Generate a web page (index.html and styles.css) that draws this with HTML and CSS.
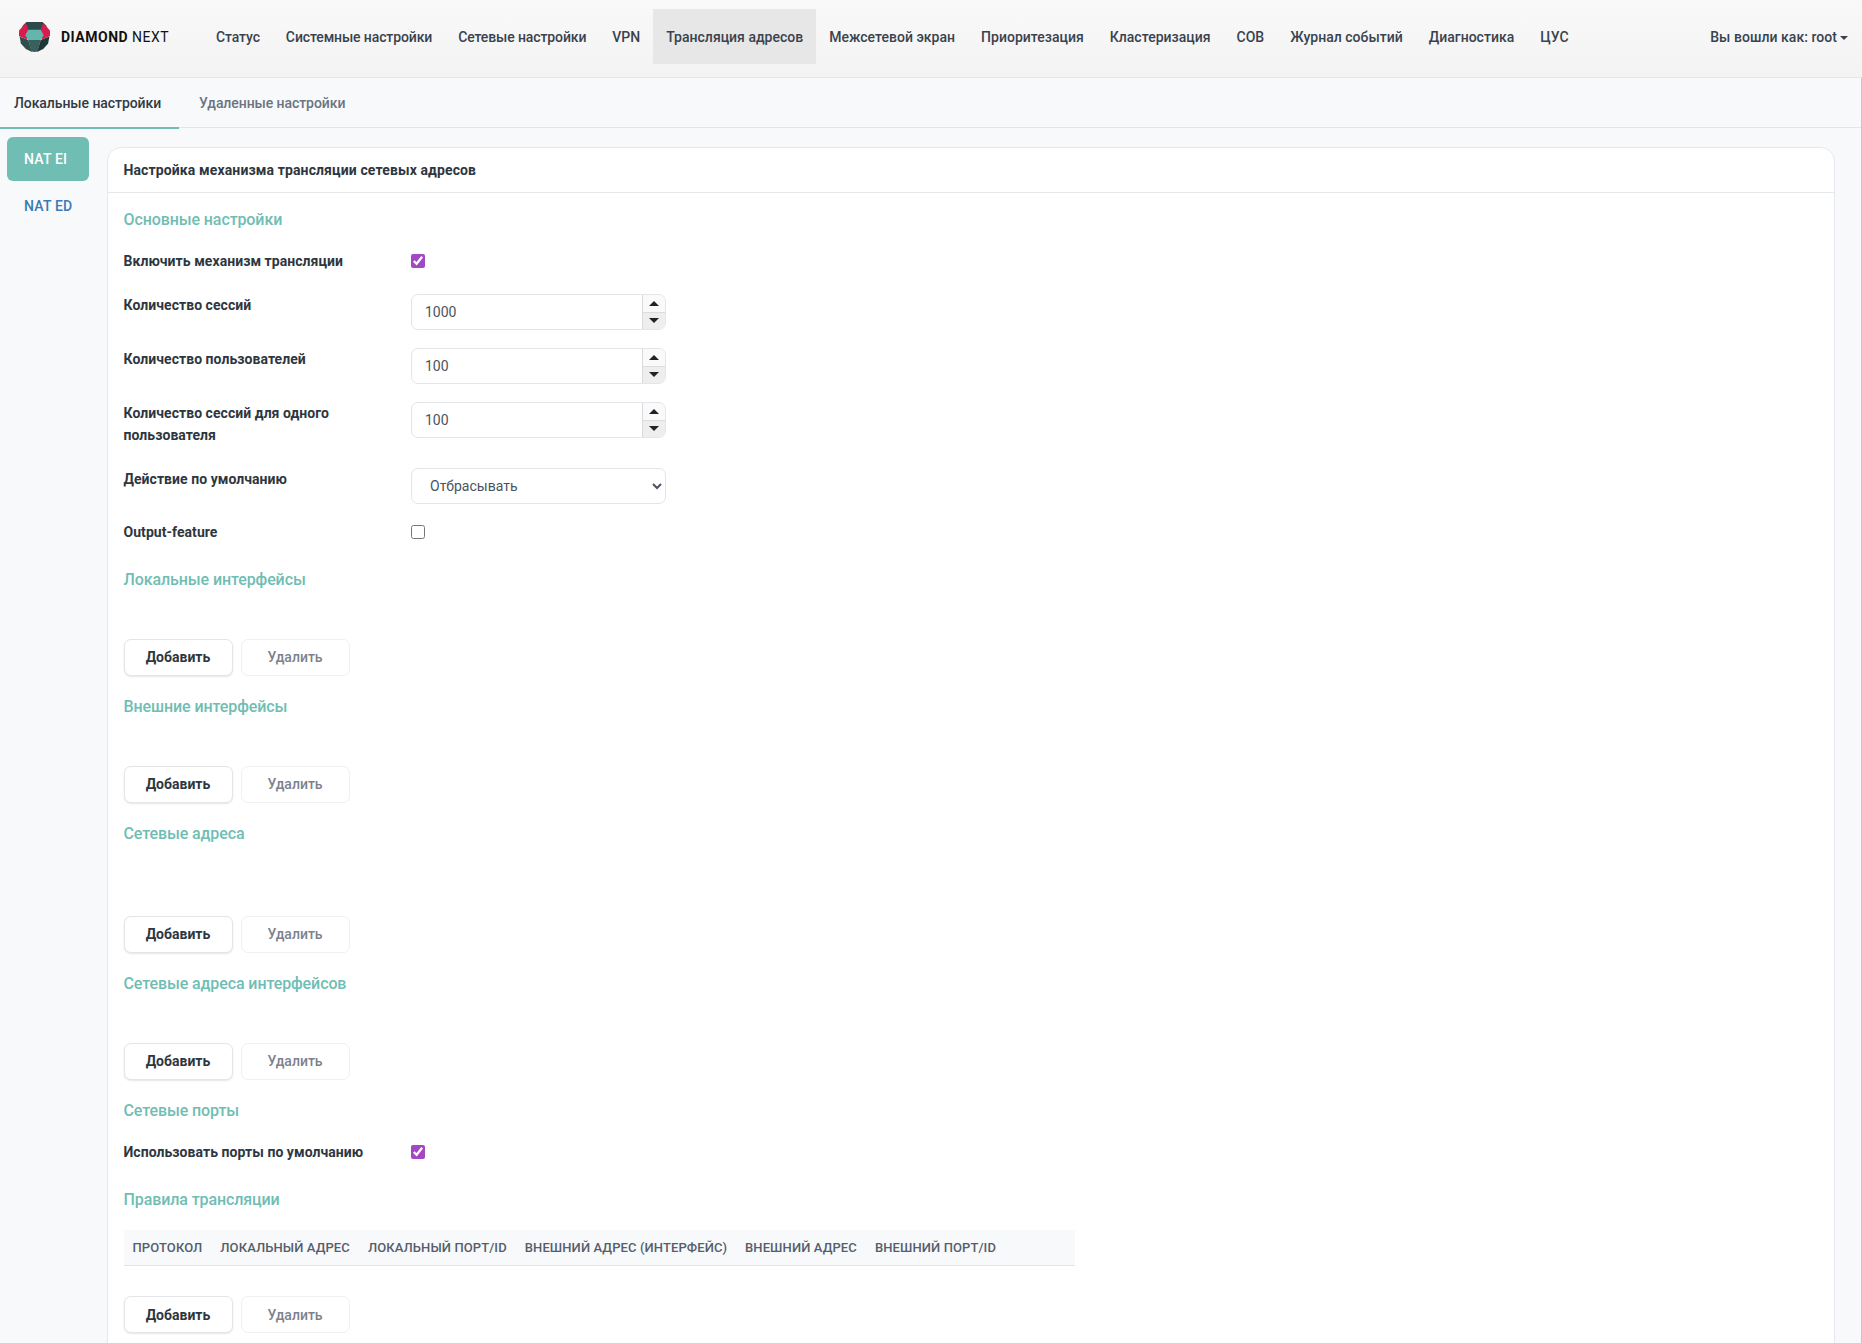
FILE: index.html
```html
<!DOCTYPE html>
<html lang="ru">
<head>
    <meta charset="UTF-8">
    <title>Diamond Next</title>
    <link rel="stylesheet" href="styles.css">
</head>
<body>
    <header class="topbar">
        <a class="brand" href="#">
            <svg class="brand-logo" viewBox="0 0 100 100" width="31" height="30" preserveAspectRatio="none">
                <polygon points="24,0 76,0 90,14 70,30 30,30 10,14" fill="#2b4a49"/>
                <polygon points="22,3 32,30 26,58 0,47 0,28" fill="#d91c4b"/>
                <polygon points="78,3 68,30 74,58 100,47 100,28" fill="#d91c4b"/>
                <polygon points="30,26 70,26 80,44 70,60 30,60 20,44" fill="#63b6ae"/>
                <polygon points="2,48 30,60 42,100 22,90 6,72" fill="#2f4f4e"/>
                <polygon points="98,48 70,60 58,100 78,90 94,72" fill="#1e3838"/>
                <polygon points="30,60 70,60 60,98 50,100 40,98" fill="#3a605e"/>
            </svg>
            <span class="brand-name"><b>DIAMOND</b> NEXT</span>
        </a>
        <nav class="main-nav">
            <a href="#">Статус</a>
            <a href="#">Системные настройки</a>
            <a href="#">Сетевые настройки</a>
            <a href="#">VPN</a>
            <a href="#" class="active">Трансляция адресов</a>
            <a href="#">Межсетевой экран</a>
            <a href="#">Приоритезация</a>
            <a href="#">Кластеризация</a>
            <a href="#">СОВ</a>
            <a href="#">Журнал событий</a>
            <a href="#">Диагностика</a>
            <a href="#">ЦУС</a>
        </nav>
        <a class="user-menu" href="#">Вы вошли как: root<span class="caret"></span></a>
    </header>

    <div class="content">
        <div class="tabs">
            <a href="#" class="tab active">Локальные настройки</a>
            <a href="#" class="tab">Удаленные настройки</a>
        </div>

        <div class="layout">
            <aside class="side-nav">
                <a href="#" class="pill active">NAT EI</a>
                <a href="#" class="pill">NAT ED</a>
            </aside>

            <main class="card">
                <div class="card-header">Настройка механизма трансляции сетевых адресов</div>
                <div class="card-body">
                    <h5 class="section-title">Основные настройки</h5>

                    <div class="form-row row-check">
                        <label>Включить механизм трансляции</label>
                        <input type="checkbox" checked>
                    </div>
                    <div class="form-row">
                        <label>Количество сессий</label>
                        <div class="number-input">
                            <span class="value">1000</span>
                            <span class="spin"><i class="up"></i><i class="down"></i></span>
                        </div>
                    </div>
                    <div class="form-row">
                        <label>Количество пользователей</label>
                        <div class="number-input">
                            <span class="value">100</span>
                            <span class="spin"><i class="up"></i><i class="down"></i></span>
                        </div>
                    </div>
                    <div class="form-row row-wrapped">
                        <label>Количество сессий для одного пользователя</label>
                        <div class="number-input">
                            <span class="value">100</span>
                            <span class="spin"><i class="up"></i><i class="down"></i></span>
                        </div>
                    </div>
                    <div class="form-row row-select">
                        <label>Действие по умолчанию</label>
                        <select class="select">
                            <option>Отбрасывать</option>
                        </select>
                    </div>
                    <div class="form-row row-check">
                        <label>Output-feature</label>
                        <input type="checkbox">
                    </div>

                    <h5 class="section-title">Локальные интерфейсы</h5>
                    <div class="actions">
                        <button class="btn">Добавить</button>
                        <button class="btn disabled">Удалить</button>
                    </div>

                    <h5 class="section-title">Внешние интерфейсы</h5>
                    <div class="actions">
                        <button class="btn">Добавить</button>
                        <button class="btn disabled">Удалить</button>
                    </div>

                    <h5 class="section-title">Сетевые адреса</h5>
                    <div class="actions tall">
                        <button class="btn">Добавить</button>
                        <button class="btn disabled">Удалить</button>
                    </div>

                    <h5 class="section-title">Сетевые адреса интерфейсов</h5>
                    <div class="actions">
                        <button class="btn">Добавить</button>
                        <button class="btn disabled">Удалить</button>
                    </div>

                    <h5 class="section-title">Сетевые порты</h5>
                    <div class="form-row row-check">
                        <label>Использовать порты по умолчанию</label>
                        <input type="checkbox" checked>
                    </div>

                    <h5 class="section-title">Правила трансляции</h5>
                    <table class="rules">
                        <thead>
                            <tr>
                                <th>Протокол</th>
                                <th>Локальный адрес</th>
                                <th>Локальный порт/ID</th>
                                <th>Внешний адрес (интерфейс)</th>
                                <th>Внешний адрес</th>
                                <th>Внешний порт/ID</th>
                                <th class="filler"></th>
                            </tr>
                        </thead>
                    </table>
                    <div class="actions table-actions">
                        <button class="btn">Добавить</button>
                        <button class="btn disabled">Удалить</button>
                    </div>
                </div>
            </main>
        </div>
    </div>
</body>
</html>
```

FILE: styles.css
```css
* {
    margin: 0;
    padding: 0;
    box-sizing: border-box;
}

html, body {
    height: 100%;
    overflow: hidden;
}

body {
    font-family: Roboto, "Liberation Sans", sans-serif;
    font-size: 14px;
    background: #f8f9fb;
    color: #333a45;
}

a {
    text-decoration: none;
    color: inherit;
}

.topbar {
    display: flex;
    align-items: flex-start;
    height: 78px;
    padding: 9px 14px 0 19px;
    background: linear-gradient(#f9f9f9, #f3f3f3);
    border-bottom: 1px solid #e3e5e8;
}

.brand {
    display: flex;
    align-items: center;
    gap: 11px;
    height: 55px;
    width: 184px;
    flex-shrink: 0;
}

.brand-name {
    font-size: 14px;
    letter-spacing: 0.5px;
    color: #111;
}

.brand-name b {
    font-weight: 700;
}

.main-nav {
    display: flex;
    flex: 1;
}

.main-nav a {
    display: block;
    height: 55px;
    line-height: 57px;
    padding: 0 13px;
    font-weight: 500;
    letter-spacing: 0.015px;
    white-space: nowrap;
    color: #39424e;
}

.main-nav a:nth-child(-n+3) {
    letter-spacing: -0.115px;
}

.main-nav a.active {
    background: #e7e7e7;
}

.user-menu {
    height: 55px;
    line-height: 57px;
    font-weight: 500;
    letter-spacing: 0.05px;
    color: #39424e;
    white-space: nowrap;
}

.caret {
    display: inline-block;
    margin-left: 3px;
    vertical-align: middle;
    border-top: 4px solid #39424e;
    border-left: 4px solid transparent;
    border-right: 4px solid transparent;
}

.content {
    height: calc(100% - 78px);
    border-right: 1px solid #a8d5cf;
}

.tabs {
    display: flex;
    height: 50px;
    border-bottom: 1px solid #e3e5e8;
}

.tab {
    height: 51px;
    line-height: 51px;
    padding: 0 18px 0 14px;
    font-weight: 500;
    letter-spacing: -0.07px;
    color: #6b7480;
}

.tab + .tab {
    padding-left: 20px;
}

.tab.active {
    color: #333a45;
    border-bottom: 2px solid #70bdb3;
}

.layout {
    display: flex;
    padding: 9px 26px 0 7px;
}

.side-nav {
    width: 100px;
    flex-shrink: 0;
}

.pill {
    display: block;
    width: 82px;
    height: 44px;
    line-height: 44px;
    padding-left: 17px;
    margin-bottom: 3px;
    border-radius: 6px;
    font-weight: 500;
    font-size: 14px;
    letter-spacing: 0.2px;
    color: #3a7ab5;
}

.pill.active {
    background: #70bdb3;
    color: #fff;
}

.card {
    flex: 1;
    margin-top: 10px;
    background: #fff;
    border: 1px solid #e6e8ec;
    border-radius: 14px 14px 0 0;
}

.card-header {
    height: 45px;
    line-height: 44px;
    padding: 0 15.5px;
    font-weight: 700;
    letter-spacing: 0.12px;
    color: #2e3640;
    border-bottom: 1px solid #e6e8ec;
}

.card-body {
    padding: 15px 15.5px;
}

.section-title {
    margin-top: 19.5px;
    margin-bottom: 18px;
    font-size: 16px;
    line-height: 24px;
    font-weight: 500;
    letter-spacing: -0.1px;
    color: #70bdb3;
}

.section-title:first-child {
    margin-top: 0;
}

.row-check + .section-title {
    margin-top: 25px;
}

.form-row {
    display: flex;
    align-items: flex-start;
    margin-bottom: 18px;
}

.form-row label {
    width: 287.5px;
    line-height: 22px;
    font-weight: 700;
    letter-spacing: 0.05px;
    color: #2e3640;
}

.form-row input[type="checkbox"] {
    width: 14px;
    height: 14px;
    margin-top: 4px;
    accent-color: #a347c2;
}

.row-check {
    margin-bottom: 22px;
}

.row-wrapped {
    margin-bottom: 22px;
}

.row-select {
    margin-bottom: 17px;
}

.number-input {
    display: flex;
    width: 255px;
    height: 36px;
    background: #fff;
    border: 1px solid #e3e5e8;
    border-radius: 7px;
    overflow: hidden;
}

.value {
    flex: 1;
    padding-left: 13px;
    line-height: 34px;
    color: #4a5360;
}

.spin {
    display: flex;
    flex-direction: column;
    width: 23px;
    background: #eee;
    border-left: 1px solid #d8dadd;
}

.spin i {
    flex: 1;
    display: flex;
    align-items: center;
    justify-content: center;
}

.spin i.up {
    background: #fafafa;
    border-bottom: 1px solid #dcdcdc;
}

.spin i::after {
    content: "";
    border-left: 5px solid transparent;
    border-right: 5px solid transparent;
}

.spin i.up::after {
    border-bottom: 5px solid #222;
}

.spin i.down::after {
    border-top: 5px solid #222;
}

.select {
    width: 255px;
    height: 36px;
    padding-left: 14px;
    font-family: inherit;
    font-size: 14px;
    color: #4a5360;
    background: #fff;
    border: 1px solid #e3e5e8;
    border-radius: 7px;
}

.actions {
    display: flex;
    gap: 8px;
    margin-top: 46.5px;
    margin-bottom: 19.5px;
}

.actions.tall {
    margin-top: 69.5px;
}

.actions.table-actions {
    margin-top: 30px;
}

.btn {
    width: 109px;
    height: 37px;
    font-family: inherit;
    font-size: 14px;
    font-weight: 700;
    color: #2e3640;
    background: #fff;
    border: 1px solid #e3e5e8;
    border-radius: 7px;
    box-shadow: 0 1px 2px rgba(0, 0, 0, 0.1);
}

.btn.disabled {
    font-weight: 500;
    color: #7b828c;
    border-color: #eef0f2;
    box-shadow: none;
}

.rules {
    width: 951px;
    height: 36px;
    margin-top: 18px;
    border-collapse: collapse;
    background: #f8f9fb;
    border-bottom: 1px solid #e3e5e8;
}

.rules th {
    padding: 0 9px;
    font-size: 13px;
    font-weight: 500;
    letter-spacing: 0.1px;
    text-align: left;
    text-transform: uppercase;
    white-space: nowrap;
    color: #555e6b;
}

.rules .filler {
    width: 100%;
}
```
